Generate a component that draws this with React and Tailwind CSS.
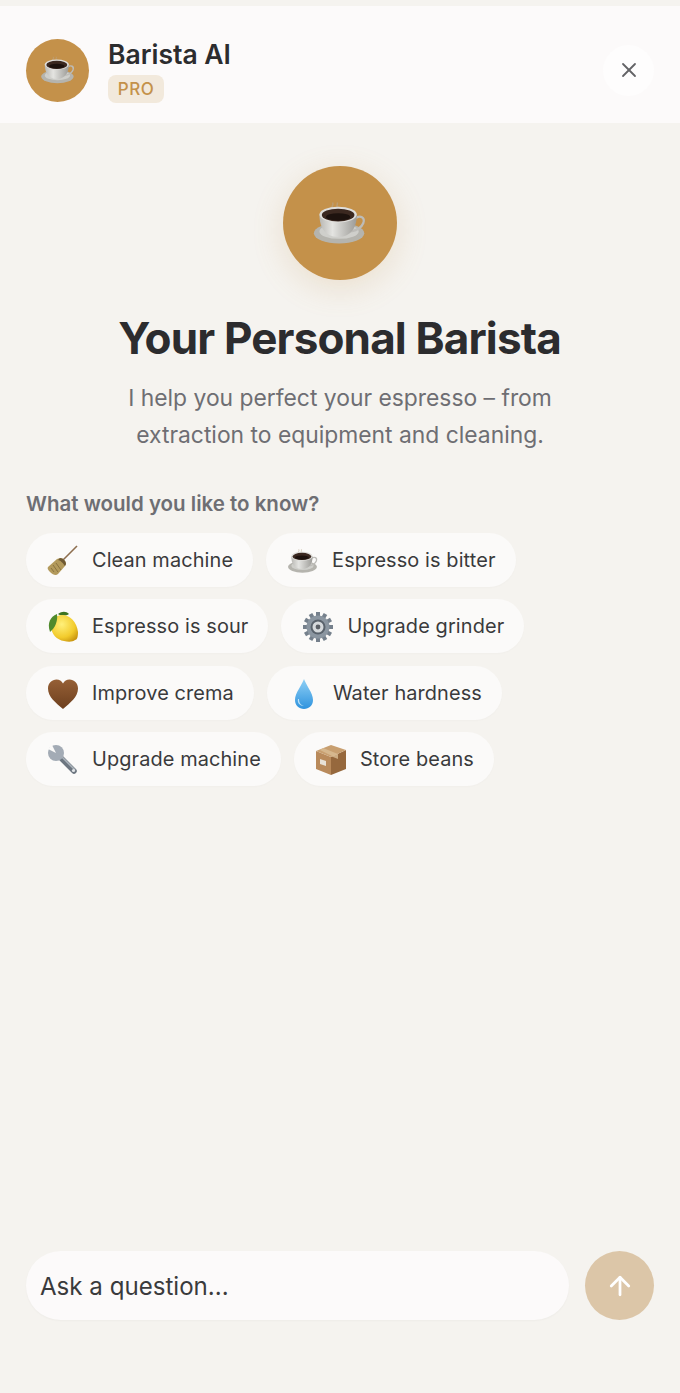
import React from 'react';
import { X, ArrowUp } from 'lucide-react';

const Coffee = ({ className }) => (
  <svg viewBox="0 0 60 50" className={className}>
    <defs>
      <linearGradient id="cupBody" x1="0" y1="0" x2="1" y2="0">
        <stop offset="0" stopColor="#b9b8b4" />
        <stop offset="0.35" stopColor="#e4e4e1" />
        <stop offset="1" stopColor="#9c9b97" />
      </linearGradient>
    </defs>
    <path d="M22 9c-2-2 2-3 0-6M27 8c-1-2 1-3 0-5" stroke="#b8a58c" strokeWidth="1.6" fill="none" opacity="0.6" />
    <ellipse cx="29" cy="36" rx="27" ry="11" fill="#b5b4ae" />
    <ellipse cx="29" cy="34" rx="21" ry="8" fill="#cfcfcb" />
    <path d="M46 20c6-4 11-1 9 5-2 5-8 8-13 9" stroke="#bdbcb8" strokeWidth="2.4" fill="none" />
    <path d="M8 16c0 14 6 24 20 24s20-10 20-24z" fill="url(#cupBody)" />
    <ellipse cx="28" cy="16" rx="20" ry="8.5" fill="#dfdedb" />
    <ellipse cx="28" cy="16.5" rx="17.5" ry="6.8" fill="#3b2820" />
    <ellipse cx="28" cy="18.5" rx="13" ry="4" fill="#1d120e" />
  </svg>
);

const Broom = () => (
  <svg viewBox="0 0 32 32" className="w-[32px] h-[32px]">
    <path d="M30 1 14 17" stroke="#8d6e4f" strokeWidth="1.6" />
    <path d="M13 13c3 0 6 3 6 6l-1 2-7 8c-2 2-5 1-8-2-2-2-3-4-2-5l9-8z" fill="#b39a5c" />
    <path d="M13 13c3 0 6 3 6 6l-1 2c-2-3-5-6-7-6z" fill="#6f5a34" />
    <path d="M6 20l5 7M9 18l5 7M4 23l3 4" stroke="#8a7340" strokeWidth="1" />
  </svg>
);

const Lemon = () => (
  <svg viewBox="0 0 32 32" className="w-[32px] h-[32px]">
    <defs>
      <radialGradient id="lemonFill" cx="0.4" cy="0.35" r="0.75">
        <stop offset="0" stopColor="#fff07a" />
        <stop offset="0.65" stopColor="#f2cb2c" />
        <stop offset="1" stopColor="#c8940f" />
      </radialGradient>
    </defs>
    <path d="M11 3c4-3 8-3 11 0-3 2-8 2-11 0z" fill="#3c7322" />
    <path d="M15 4c8 0 15 7 16 17 0 5-1 8-3 8-2 2-7 2-11 1C10 29 4 23 4 15c0-6 5-11 11-11z" fill="url(#lemonFill)" />
    <path d="M10 3C3 6 0 12 3 21c5-4 8-11 7-18z" fill="#4f8a2c" />
  </svg>
);

const Gear = () => {
  const teeth = [0, 30, 60, 90, 120, 150, 180, 210, 240, 270, 300, 330];
  return (
    <svg viewBox="0 0 32 32" className="w-[32px] h-[32px]">
      {teeth.map((a) => (
        <rect key={a} x="14" y="1" width="4" height="7" fill="#75808c" transform={`rotate(${a} 16 16)`} />
      ))}
      <circle cx="16" cy="16" r="11.5" fill="#8b96a1" />
      <circle cx="16" cy="16" r="7.5" fill="#59626c" />
      <circle cx="16" cy="16" r="5.5" fill="#d5d9dc" />
      <circle cx="16" cy="16" r="2.4" fill="#5a5f66" />
    </svg>
  );
};

const Heart = () => (
  <svg viewBox="0 0 32 32" className="w-[32px] h-[32px]">
    <defs>
      <linearGradient id="heartFill" x1="0" y1="0" x2="0" y2="1">
        <stop offset="0" stopColor="#966036" />
        <stop offset="1" stopColor="#6d3f1e" />
      </linearGradient>
    </defs>
    <path d="M16 31C9 25 1 19 1 10.500 1 5 5 1.500 9.500 1.500c3 0 5 1.500 6.500 4 1.500-2.500 3.500-4 6.500-4C27 1.500 31 5 31 10.500 31 19 23 25 16 31z" fill="url(#heartFill)" />
  </svg>
);

const Drop = () => (
  <svg viewBox="0 0 32 32" className="w-[32px] h-[32px]">
    <defs>
      <linearGradient id="dropFill" x1="0" y1="0" x2="0" y2="1">
        <stop offset="0" stopColor="#8fd0f5" />
        <stop offset="1" stopColor="#2f93de" />
      </linearGradient>
    </defs>
    <path d="M16 1c2 6 9 14 9 21 0 5.500-4 9-9 9s-9-3.500-9-9C7 15 14 7 16 1z" fill="url(#dropFill)" />
    <path d="M11 21c0 4 2 6 5 7-4 0-7-3-6-7z" fill="#d6f0fc" opacity="0.8" />
  </svg>
);

const Wrench = () => (
  <svg viewBox="0 0 32 32" className="w-[32px] h-[32px]">
    <path d="M11 11 27 27" stroke="#6d7680" strokeWidth="5.5" strokeLinecap="round" />
    <path d="M11 9 28 26" stroke="#aab2ba" strokeWidth="1.6" />
    <circle cx="9" cy="9" r="8" fill="#a3abb5" />
    <path d="M9 9 1 5 5 1z" fill="#fbfaf9" />
    <circle cx="26.500" cy="26.500" r="1.600" fill="#e2e5e8" />
  </svg>
);

const Box = () => (
  <svg viewBox="0 0 32 32" className="w-[32px] h-[32px]">
    <path d="M1 7l15 6v18L1 25z" fill="#b98a5b" />
    <path d="M31 6 16 13v18l15-6z" fill="#96683d" />
    <path d="M1 7l15-6 15 5-15 7z" fill="#c89f70" />
    <path d="M8 4l15 6v5l-5-2-1-1L5 6z" fill="#d9bd95" opacity="0.8" />
    <path d="M5 15l6 2v5l-6-2z" fill="#e8e1d6" />
  </svg>
);

const suggestions = [
  [
    { icon: <Broom />, label: 'Clean machine' },
    { icon: <Coffee className="w-[32px] h-[28px]" />, label: 'Espresso is bitter' },
  ],
  [
    { icon: <Lemon />, label: 'Espresso is sour' },
    { icon: <Gear />, label: 'Upgrade grinder' },
  ],
  [
    { icon: <Heart />, label: 'Improve crema' },
    { icon: <Drop />, label: 'Water hardness' },
  ],
  [
    { icon: <Wrench />, label: 'Upgrade machine' },
    { icon: <Box />, label: 'Store beans' },
  ],
];

const App = () => {
  return (
    <div className="h-[1393px] flex flex-col bg-[#f5f3ef] font-['Inter',sans-serif] text-[#2c2c2e]">
      <header className="mt-[6px] h-[117px] bg-[#fcfafa] flex items-center pt-[11px] pl-[26px] pr-[26px]">
        <div className="w-[63px] h-[63px] rounded-full bg-[#c4914a] flex items-center justify-center">
          <Coffee className="w-[36px] h-[30px]" />
        </div>
        <div className="ml-[19px] flex flex-col items-start">
          <h2 className="text-[26.500px] leading-[32px] font-semibold">Barista AI</h2>
          <span className="mt-[5px] pt-[2px] h-[28px] w-[56px] rounded-[8px] bg-[#f2e9dc] text-[#c4914a] text-[17px] font-medium tracking-[0.5px] flex items-center justify-center">
            PRO
          </span>
        </div>
        <button className="ml-auto w-[51px] h-[51px] rounded-full bg-[#fefdfd] flex items-center justify-center text-[#636366]">
          <X size={24} strokeWidth={1.8} />
        </button>
      </header>

      <main className="flex-1 px-[26px] pt-[43px]">
        <div className="flex flex-col items-center">
          <div className="w-[114px] h-[114px] rounded-full bg-[#c4914a] flex items-center justify-center shadow-[0_8px_32px_rgba(196,145,74,0.2)]">
            <Coffee className="w-[56px] h-[48px]" />
          </div>
          <h1 className="mt-[30px] text-[44px] leading-[56px] font-bold tracking-[-0.85px] -translate-x-[0.5px]">Your Personal Barista</h1>
          <p className="mt-[14px] text-[22.850px] leading-[36.500px] text-[#6e6e73] text-center">
            I help you perfect your espresso – from
            <br />
            extraction to equipment and cleaning.
          </p>
        </div>

        <p className="mt-[37px] text-[20.500px] leading-[28px] font-semibold text-[#6e6e73]">What would you like to know?</p>
        <div className="mt-[15px] flex flex-col gap-[12.300px]">
          {suggestions.map((row, i) => (
            <div key={i} className="flex gap-[13px]">
              {row.map((s) => (
                <button
                  key={s.label}
                  className="h-[54px] rounded-full bg-[#fbfaf9] pl-[21px] pr-[20px] pt-[2px] flex items-center gap-[13px] text-[19.900px] tracking-[0.12px] text-[#3a3a3c] shadow-[0_1px_2px_rgba(0,0,0,0.02)]"
                >
                  <span className="w-[32px] flex items-center justify-center">{s.icon}</span>
                  {s.label}
                </button>
              ))}
            </div>
          ))}
        </div>
      </main>

      <footer className="h-[142px] px-[26px] pb-[73px] flex items-center gap-[16px]">
        <div className="flex-1 h-[69px] rounded-full bg-[#fcfafa] flex items-center pl-[14px] pt-[3px] text-[24.100px] text-[#3a3a3c] shadow-[0_1px_2px_rgba(0,0,0,0.03)]">
          Ask a question...
        </div>
        <button className="w-[69px] h-[69px] rounded-full bg-[#dcc6a8] flex items-center justify-center text-white">
          <ArrowUp size={30} strokeWidth={2.2} />
        </button>
      </footer>
    </div>
  );
};

export default App;
